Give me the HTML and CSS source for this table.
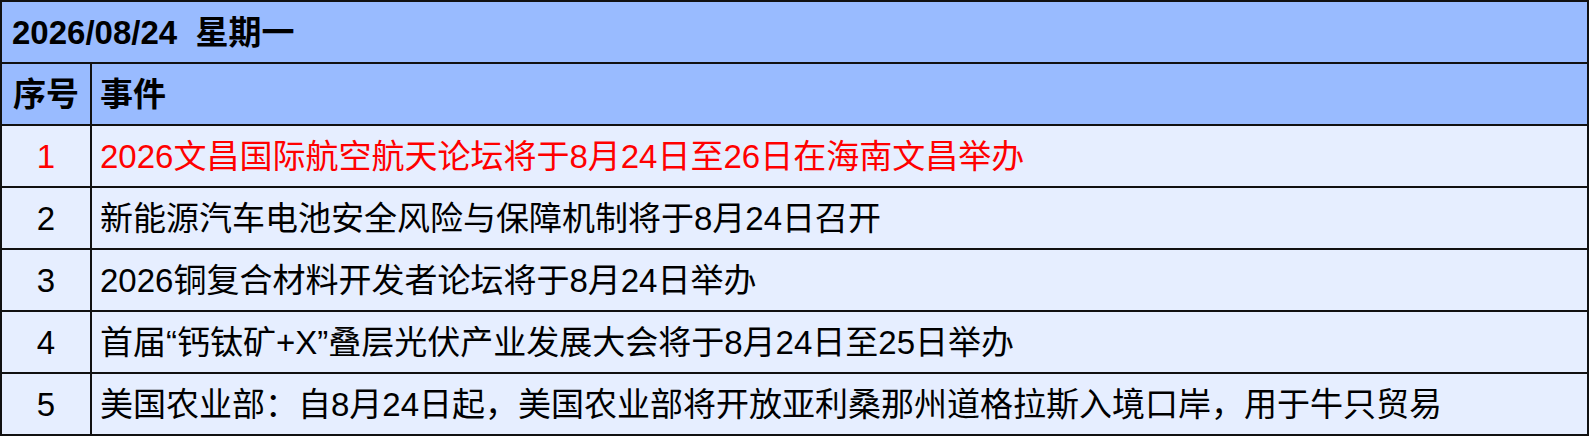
FILE: index.html
```html
<!DOCTYPE html>
<html lang="zh">
<head>
<meta charset="utf-8">
<link rel="stylesheet" href="styles.css">
</head>
<body>
<table class="events">
  <colgroup><col class="col-idx"><col class="col-evt"></colgroup>
  <tr class="title-row"><th colspan="2" class="title">2026/08/24&nbsp;&nbsp;星期一</th></tr>
  <tr class="head-row"><th class="idx">序号</th><th class="evt">事件</th></tr>
  <tr class="hot"><td class="idx">1</td><td class="evt">2026文昌国际航空航天论坛将于8月24日至26日在海南文昌举办</td></tr>
  <tr><td class="idx">2</td><td class="evt">新能源汽车电池安全风险与保障机制将于8月24日召开</td></tr>
  <tr><td class="idx">3</td><td class="evt">2026铜复合材料开发者论坛将于8月24日举办</td></tr>
  <tr><td class="idx">4</td><td class="evt">首届“钙钛矿+X”叠层光伏产业发展大会将于8月24日至25日举办</td></tr>
  <tr><td class="idx">5</td><td class="evt">美国农业部：自8月24日起，美国农业部将开放亚利桑那州道格拉斯入境口岸，用于牛只贸易</td></tr>
  <tr><td class="idx"></td><td class="evt"></td></tr>
</table>
</body>
</html>
```
FILE: styles.css
```css
html, body {
  margin: 0;
  padding: 0;
  background: #ffffff;
}
body {
  font-family: "Liberation Sans", "Noto Sans CJK SC", sans-serif;
  font-size: 33px;
  color: #000000;
}
.events {
  width: 1589px;
  border-collapse: collapse;
  table-layout: fixed;
}
.col-idx {
  width: 90px;
}
.events th,
.events td {
  border: 2px solid #111111;
  height: 60px;
  padding: 0;
  line-height: 1;
  vertical-align: middle;
  overflow: hidden;
}
.events th {
  background: #99bbff;
  font-weight: bold;
}
.events td {
  background: #e6eeff;
  font-weight: normal;
}
.title {
  text-align: left;
  padding-left: 10px !important;
  white-space: pre;
}
.idx {
  text-align: center;
}
.evt {
  text-align: left;
  padding-left: 8px !important;
  white-space: nowrap;
}
.hot td {
  color: #ff0000;
}
```
